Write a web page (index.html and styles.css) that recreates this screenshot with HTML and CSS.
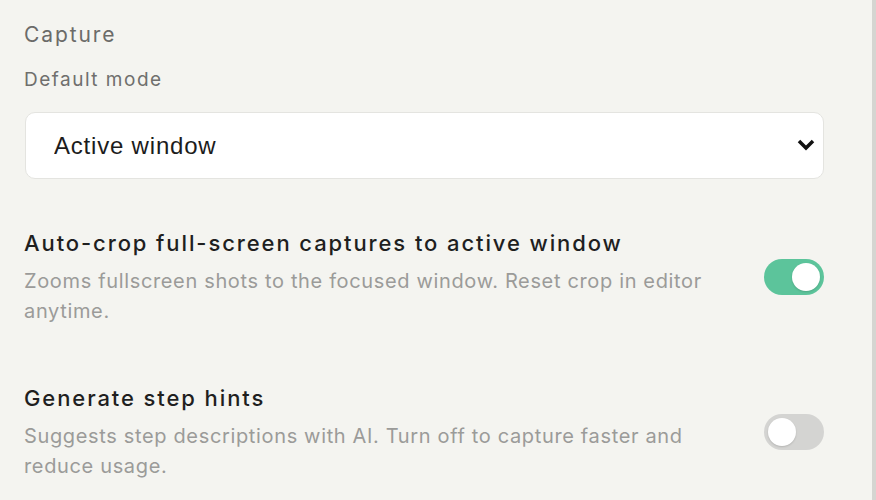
FILE: index.html
```html
<html>
<head>
<title>Capture settings</title>
<link rel="stylesheet" href="styles.css">
</head>
<body>
<div class="panel">
	<div class="section-title">Capture</div>
	<label class="field-label" for="mode">Default mode</label>
	<div class="select-wrap">
		<select id="mode" class="select">
			<option>Active window</option>
			<option>Full screen</option>
			<option>Region</option>
		</select>
		<svg class="chevron" width="20" height="13" viewBox="0 0 20 13"><path d="M3 3 L10 10 L17 3" fill="none" stroke="#111" stroke-width="3.5"/></svg>
	</div>

	<div class="setting">
		<div class="setting-text">
			<div class="setting-title">Auto-crop full-screen captures to active window</div>
			<div class="setting-desc">Zooms fullscreen shots to the focused window. Reset crop in editor anytime.</div>
		</div>
		<div class="toggle on"><span class="knob"></span></div>
	</div>

	<div class="setting second">
		<div class="setting-text">
			<div class="setting-title">Generate step hints</div>
			<div class="setting-desc">Suggests step descriptions with AI. Turn off to capture faster and reduce usage.</div>
		</div>
		<div class="toggle"><span class="knob"></span></div>
	</div>
</div>
</body>
</html>
```

FILE: styles.css
```css
body {
	margin: 0;
	background-color: #f4f4f0;
	font-family: Inter, "Noto Sans", sans-serif;
}
.panel {
	height: 500px;
	box-sizing: border-box;
	padding: 20px 48px 0 24px;
	border-right: 4px solid #d5d5d1;
	overflow: hidden;
}
.section-title {
	font-size: 21px;
	line-height: 30px;
	letter-spacing: 1.9px;
	color: #6b6b69;
}
.field-label {
	display: block;
	margin-top: 17px;
	font-size: 19px;
	line-height: 26px;
	letter-spacing: 1.5px;
	color: #6f6f6d;
}
.select-wrap {
	position: relative;
	margin-top: 19px;
	margin-left: 1px;
}
.select {
	appearance: none;
	-webkit-appearance: none;
	width: 100%;
	height: 67px;
	padding: 0 28px;
	background-color: #fff;
	border: 1px solid #e4e4e0;
	border-radius: 10px;
	font-family: "Liberation Sans", Arial, sans-serif;
	font-size: 24px;
	letter-spacing: 0.8px;
	color: #1c1c1c;
}
.chevron {
	position: absolute;
	right: 8px;
	top: 26px;
}
.setting {
	display: flex;
	align-items: center;
	justify-content: space-between;
	margin-top: 49px;
}
.setting.second {
	margin-top: 57px;
}
.setting-text {
	width: 724px;
}
.setting-title {
	font-size: 22px;
	line-height: 30px;
	font-weight: 500;
	letter-spacing: 1.9px;
	color: #1f1f1f;
}
.setting-desc {
	margin-top: 8px;
	font-size: 20px;
	line-height: 30px;
	letter-spacing: 0.65px;
	color: #9b9b99;
}
.toggle {
	position: relative;
	width: 60px;
	height: 36px;
	border-radius: 18px;
	background-color: #d4d4d2;
	flex-shrink: 0;
}
.toggle.on {
	background-color: #5cc49b;
}
.knob {
	position: absolute;
	top: 4px;
	left: 4px;
	width: 28px;
	height: 28px;
	border-radius: 50%;
	background-color: #fff;
	box-shadow: 0 1px 2px rgba(0, 0, 0, 0.15);
}
.toggle.on .knob {
	left: 28px;
}
```
